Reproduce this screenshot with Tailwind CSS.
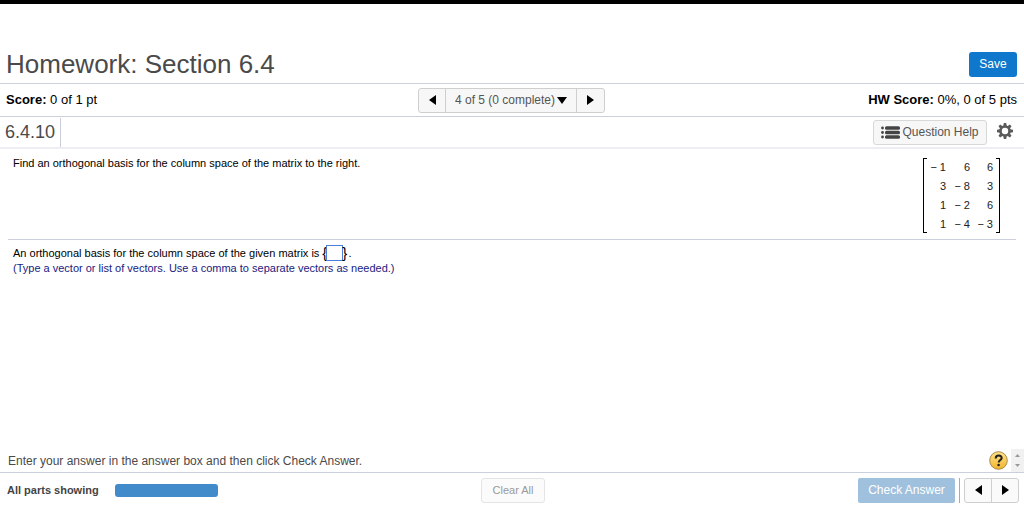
<!DOCTYPE html>
<html lang="en">
<head>
<meta charset="utf-8">
<title>Homework: Section 6.4</title>
<script src="https://cdn.jsdelivr.net/npm/@tailwindcss/browser@4"></script>
</head>
<body class="flex min-h-screen flex-col border-t-4 border-black bg-white font-['Liberation_Sans',sans-serif] text-[13px] leading-4 text-black">
  <header class="flex h-20 items-end justify-between border-b border-[#cccfdc] pr-[7px] pb-[6px] pl-[6px]">
    <h1 class="text-[26px] leading-[26px] text-[#4a4a4a]">Homework: Section 6.4</h1>
    <button class="h-[25px] w-12 rounded-[3px] bg-[#0f78cc] pb-[2px] text-xs text-white">Save</button>
  </header>

  <section class="grid h-[33px] grid-cols-[1fr_auto_1fr] items-center border-b border-[#cccfdc] pr-[7px] pl-[6px]">
    <p><b>Score:</b> 0 of 1 pt</p>
    <nav class="flex h-[25px] divide-x divide-[#cfcfcf] rounded-[3px] border border-[#cfcfcf] bg-[#f7f7f7] text-xs text-[#555]">
      <button class="flex w-[27px] items-center justify-center" aria-label="Previous question"><svg width="7" height="10" viewBox="0 0 7 10"><path d="M7 0v10L0 5z" fill="#000"/></svg></button>
      <button class="flex w-[131px] items-center justify-center gap-[2px]">4 of 5 (0 complete)<svg width="10" height="7" viewBox="0 0 10 7"><path d="M0 0h10L5 7z" fill="#000"/></svg></button>
      <button class="flex w-[27px] items-center justify-center" aria-label="Next question"><svg width="7" height="10" viewBox="0 0 7 10"><path d="M0 0v10l7-5z" fill="#000"/></svg></button>
    </nav>
    <p class="text-right"><b>HW Score:</b> 0%, 0 of 5 pts</p>
  </section>

  <section class="flex h-8 items-center justify-between border-b-2 border-[#ededf4] pr-[11px]">
    <h2 class="mt-px flex h-[29px] items-center self-start border-r border-[#c9ccda] px-[5px] pb-px text-[18px] text-[#4a4a4a]">6.4.10</h2>
    <div class="flex items-center gap-[10px]">
      <button class="flex h-[25px] w-[114px] items-center justify-center gap-[2px] rounded-[3px] border border-[#d8d8d8] bg-[#f7f7f7] text-xs text-[#555]"><svg width="19" height="13" viewBox="0 0 19 13" fill="#444"><circle cx="1.5" cy="2" r="1.4"/><circle cx="1.5" cy="6.5" r="1.4"/><circle cx="1.5" cy="11" r="1.4"/><rect x="4" y=".3" width="15" height="3.400" rx="1.5"/><rect x="4" y="4.800" width="15" height="3.400" rx="1.5"/><rect x="4" y="9.300" width="15" height="3.400" rx="1.5"/></svg>Question Help</button>
      <button class="pb-[2px]" aria-label="Settings"><svg width="16" height="16" viewBox="-8 -8 16 16"><g fill="#5a5a5a"><g id="teeth"><path id="tooth" d="M-1.700-5 -1.200-8h2.400L1.700-5v10L1.200 8h-2.400L-1.700 5z"/><use href="#tooth" transform="rotate(90)"/></g><use href="#teeth" transform="rotate(45)"/><circle r="5.800"/></g><circle r="3.200" fill="#fff"/></svg></button>
    </div>
  </section>

  <main class="flex-1 px-2 text-[11px] leading-[14px]">
    <section class="flex min-h-[91px] items-start justify-between border-b border-[#cccfdc] pt-[7px] pr-4 pl-[5px]">
      <p>Find an orthogonal basis for the column space of the matrix to the right.</p>
      <div class="mt-[2px] flex text-[#222]">
        <span class="w-1 border-y border-l border-black"></span>
        <table class="text-right leading-4">
          <tr class="h-[19px]"><td class="w-[19px] pb-[2px]">− 1</td><td class="w-[24px] pb-[2px]">6</td><td class="w-[23px] pb-[2px]">6</td></tr>
          <tr class="h-[19px]"><td class="pb-[2px]">3</td><td class="pb-[2px]">− 8</td><td class="pb-[2px]">3</td></tr>
          <tr class="h-[19px]"><td class="pb-[2px]">1</td><td class="pb-[2px]">− 2</td><td class="pb-[2px]">6</td></tr>
          <tr class="h-[18px]"><td>1</td><td>− 4</td><td>− 3</td></tr>
        </table>
        <span class="ml-[3px] w-1 border-y border-r border-black"></span>
      </div>
    </section>
    <section class="pt-[5px] pl-[5px]">
      <label class="flex h-4 items-center" for="answer">An orthogonal basis for the column space of the given matrix is
        <span class="ml-[3px] flex items-center text-[15px]">{<input id="answer" class="-mx-px h-4 w-[17px] border border-[#4a7fe0] bg-white text-[11px]">}</span><span class="pl-px">.</span></label>
      <p class="text-[#1a1a80]">(Type a vector or list of vectors. Use a comma to separate vectors as needed.)</p>
    </section>
  </main>

  <footer>
    <div class="flex h-6 items-center justify-between border-b border-[#cccfdc] pl-2">
      <p class="text-xs text-[#4a4a4a]">Enter your answer in the answer box and then click Check Answer.</p>
      <div class="flex items-center gap-[3px]">
        <button aria-label="Help"><svg width="19" height="19" viewBox="0 0 19 19"><defs><linearGradient id="gold" x2="0" y2="1"><stop stop-color="#ffe58a"/><stop offset="1" stop-color="#f0b32d"/></linearGradient></defs><circle cx="9.500" cy="9.500" r="8.800" fill="url(#gold)" stroke="#a88a45"/><path d="M6.700 7.400c0-3.800 6-3.700 6-.4 0 2-3 2.200-3 4.600" fill="none" stroke="#222" stroke-width="2"/><circle cx="9.600" cy="14" r="1.300" fill="#222"/></svg></button>
        <div class="flex h-[23px] w-[13px] flex-col items-center justify-around bg-[#f1f1f1] py-[2px]">
          <svg width="5" height="3" viewBox="0 0 5 3"><path d="M0 3h5L2.500 0z" fill="#999"/></svg>
          <svg width="5" height="3" viewBox="0 0 5 3"><path d="M0 0h5L2.500 3z" fill="#999"/></svg>
        </div>
      </div>
    </div>
    <div class="grid h-[38px] grid-cols-[1fr_auto_1fr] items-center pr-[5px] pb-1 pl-[7px]">
      <div class="flex items-center gap-4 text-[11px] font-bold text-[#444]">All parts showing<span class="h-[13px] w-[103px] rounded-[3px] bg-[#428bca]"></span></div>
      <button class="h-[25px] w-16 rounded-[3px] border border-[#e4e4e4] bg-[#fbfbfb] text-[11px] text-[#999]">Clear All</button>
      <div class="flex items-center justify-end gap-1">
        <button class="h-[25px] w-[97px] rounded-[2px] bg-[#9fc1dd] text-xs text-white">Check Answer</button>
        <span class="h-[25px] w-px bg-[#aaa]"></span>
        <div class="flex h-[25px] divide-x divide-[#cfcfcf] rounded-[3px] border border-[#cfcfcf] bg-[#fafafa]">
          <button class="flex w-[27px] items-center justify-center" aria-label="Previous part"><svg width="7" height="10" viewBox="0 0 7 10"><path d="M7 0v10L0 5z" fill="#000"/></svg></button>
          <button class="flex w-[26px] items-center justify-center" aria-label="Next part"><svg width="7" height="10" viewBox="0 0 7 10"><path d="M0 0v10l7-5z" fill="#000"/></svg></button>
        </div>
      </div>
    </div>
  </footer>
</body>
</html>
